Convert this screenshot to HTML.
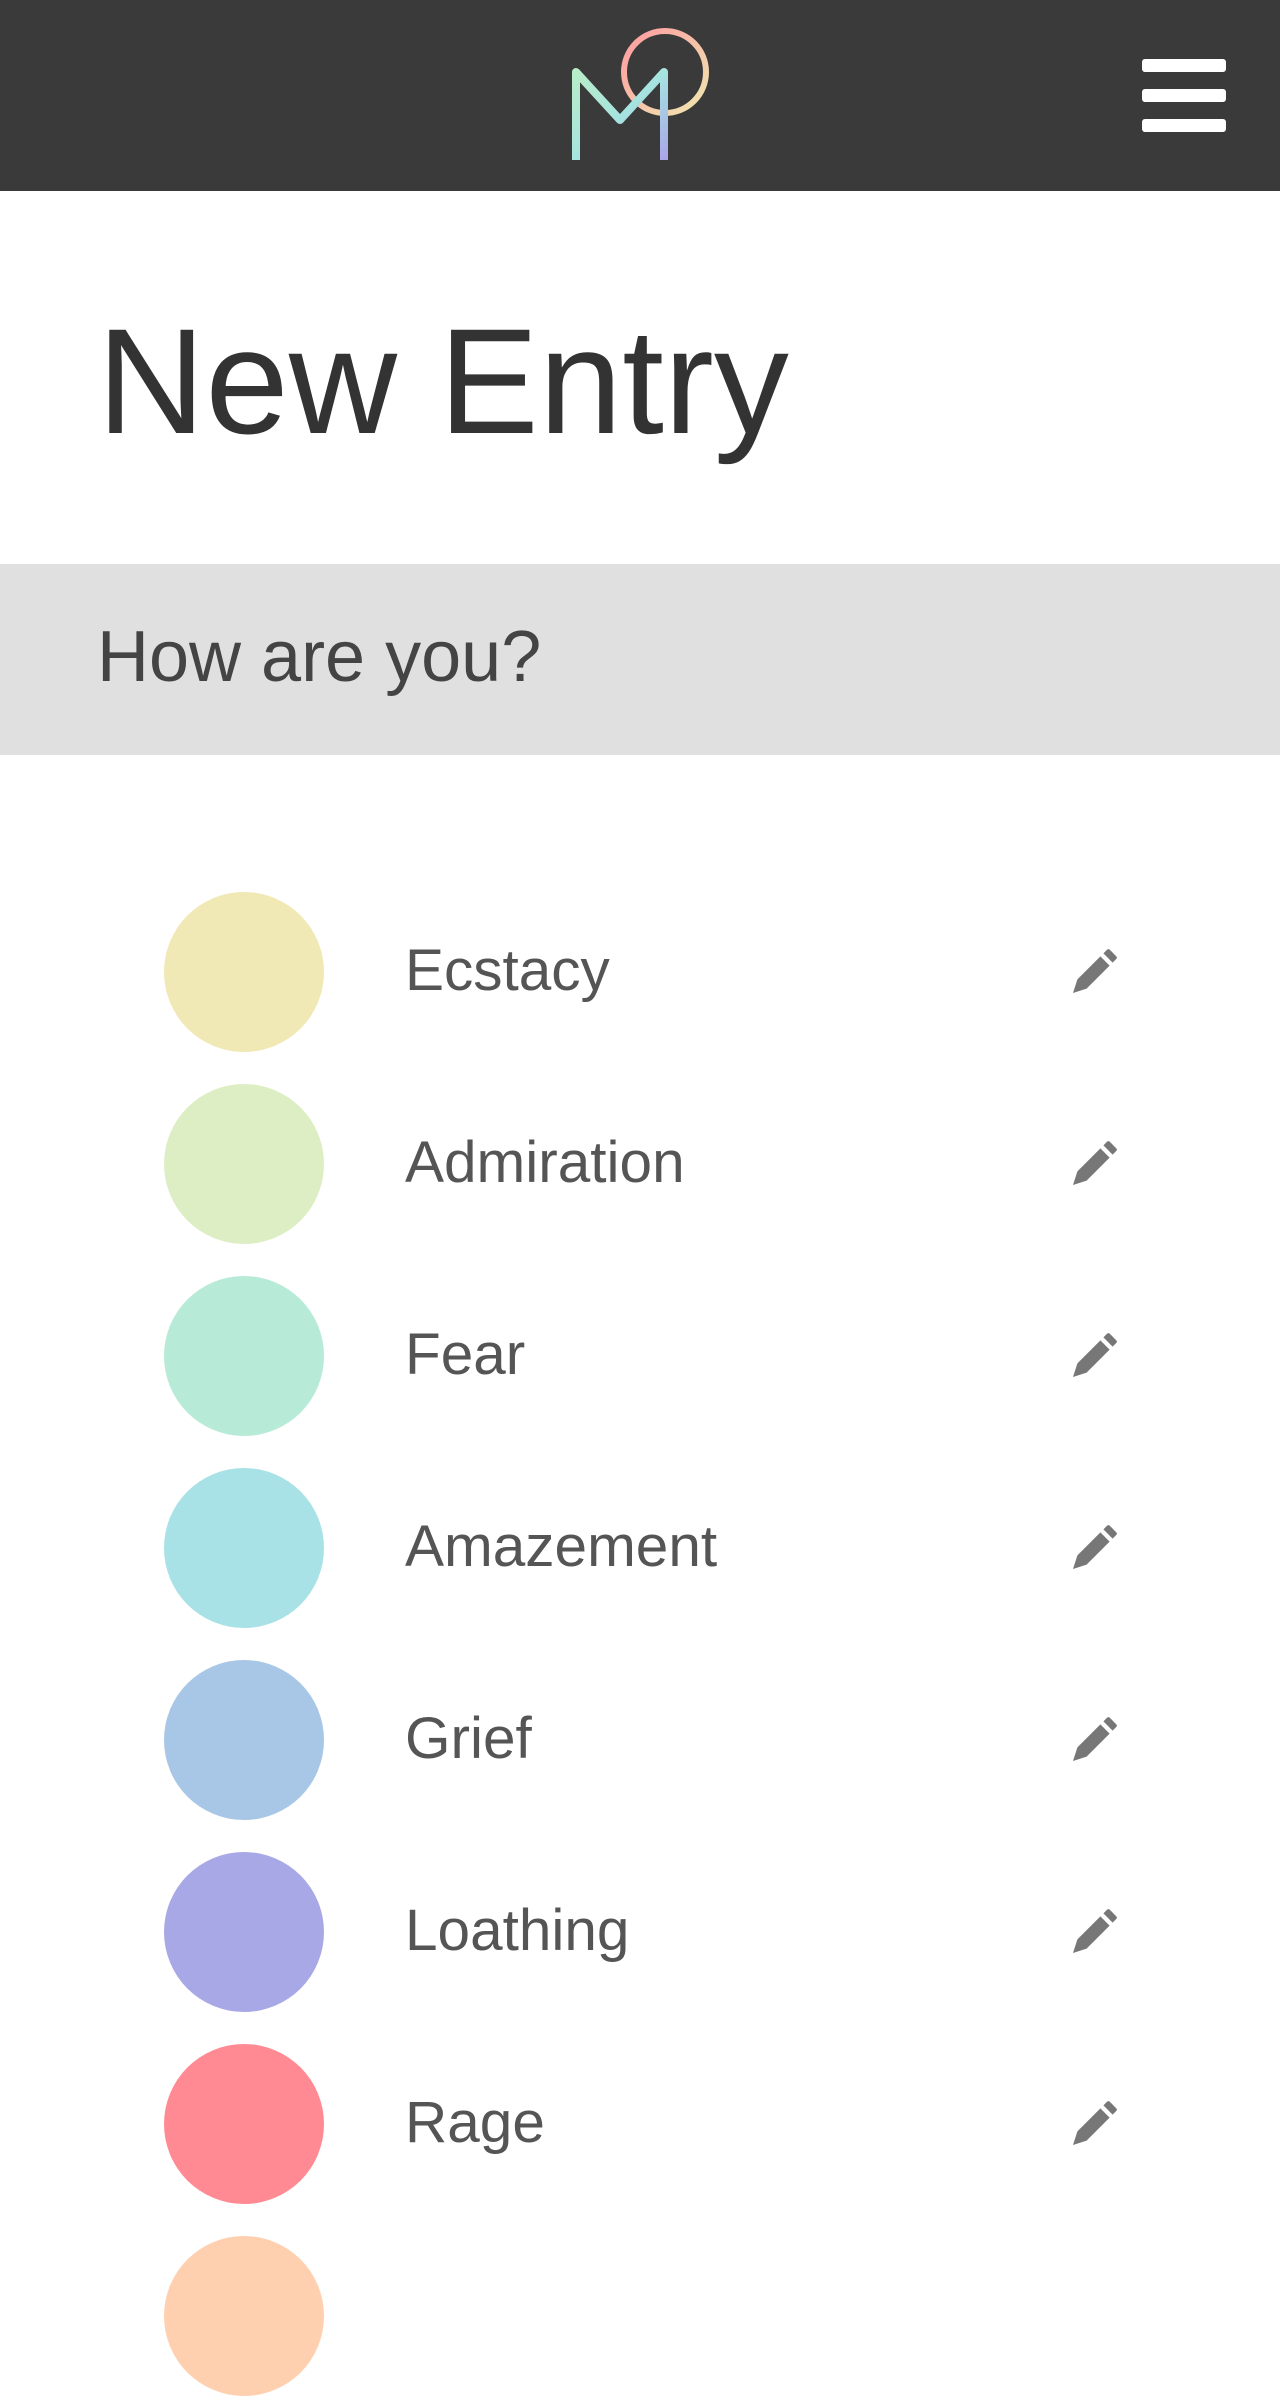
<!DOCTYPE html>
<html><head><meta charset="utf-8"><style>
body{margin:0;width:1280px;height:2268px;overflow:hidden;background:#fff;font-family:"Liberation Sans",sans-serif;}
.hdr{position:absolute;left:0;top:0;width:1280px;height:191px;background:#3a3a3a;}
.ham{position:absolute;left:1142px;width:84px;height:13px;background:#fff;border-radius:3px;}
h1{position:absolute;left:97px;top:306px;margin:0;font-weight:normal;font-size:150px;color:#333;line-height:1;}
.band{position:absolute;left:0;top:564px;width:1280px;height:191px;background:#e0e0e0;}
.band span{position:absolute;left:97px;top:50px;font-size:72px;color:#444;line-height:1.2;}
.row{position:absolute;left:0;width:1280px;height:160px;}
.c{position:absolute;left:164px;top:0;width:160px;height:160px;border-radius:50%;}
.t{position:absolute;left:405px;top:44px;font-size:58.5px;color:#555;line-height:1.2;}
.p{position:absolute;left:1070px;top:54px;}
</style></head><body>
<div class="hdr">
<svg width="1280" height="191" style="position:absolute;left:0;top:0">
<defs>
<linearGradient id="g1" x1="0" y1="0" x2="1" y2="1"><stop offset="0" stop-color="#b8ecc8"/><stop offset="0.5" stop-color="#a6e4e0"/><stop offset="1" stop-color="#aaa6ea"/></linearGradient>
<linearGradient id="g2" x1="0" y1="0" x2="1" y2="1"><stop offset="0" stop-color="#ff9aa0"/><stop offset="1" stop-color="#efe8b0"/></linearGradient>
</defs>
<circle cx="665" cy="72" r="41" fill="none" stroke="url(#g2)" stroke-width="6"/>
<path d="M576 160 V72 L620 120 L664 72 V160" fill="none" stroke="url(#g1)" stroke-width="8" stroke-linejoin="round"/>
</svg>
<div class="ham" style="top:59px"></div><div class="ham" style="top:89px"></div><div class="ham" style="top:119px"></div>
</div>
<h1>New Entry</h1>
<div class="band"><span>How are you?</span></div>

<svg width="0" height="0" style="position:absolute"><defs><path id="pen" d="M3 47 L7.4 33.4 L30.4 10.4 L39.6 19.6 L16.6 42.6 Z M33.4 7.4 L37 3.8 Q38.4 2.4 39.8 3.8 L46.2 10.2 Q47.6 11.6 46.2 13 L42.6 16.6 Z" fill="#777"/></defs></svg>

<div class="row" style="top:892px"><div class="c" style="background:#f0e8b5"></div><div class="t">Ecstacy</div><svg class="p" width="50" height="50"><use href="#pen"/></svg></div>
<div class="row" style="top:1084px"><div class="c" style="background:#ddeec4"></div><div class="t">Admiration</div><svg class="p" width="50" height="50"><use href="#pen"/></svg></div>
<div class="row" style="top:1276px"><div class="c" style="background:#b8ead8"></div><div class="t">Fear</div><svg class="p" width="50" height="50"><use href="#pen"/></svg></div>
<div class="row" style="top:1468px"><div class="c" style="background:#a8e2e6"></div><div class="t">Amazement</div><svg class="p" width="50" height="50"><use href="#pen"/></svg></div>
<div class="row" style="top:1660px"><div class="c" style="background:#a8c6e6"></div><div class="t">Grief</div><svg class="p" width="50" height="50"><use href="#pen"/></svg></div>
<div class="row" style="top:1852px"><div class="c" style="background:#a8a8e6"></div><div class="t">Loathing</div><svg class="p" width="50" height="50"><use href="#pen"/></svg></div>
<div class="row" style="top:2044px"><div class="c" style="background:#ff8a94"></div><div class="t">Rage</div><svg class="p" width="50" height="50"><use href="#pen"/></svg></div>
<div class="row" style="top:2236px"><div class="c" style="background:#ffd0b0"></div></div>
</body></html>
